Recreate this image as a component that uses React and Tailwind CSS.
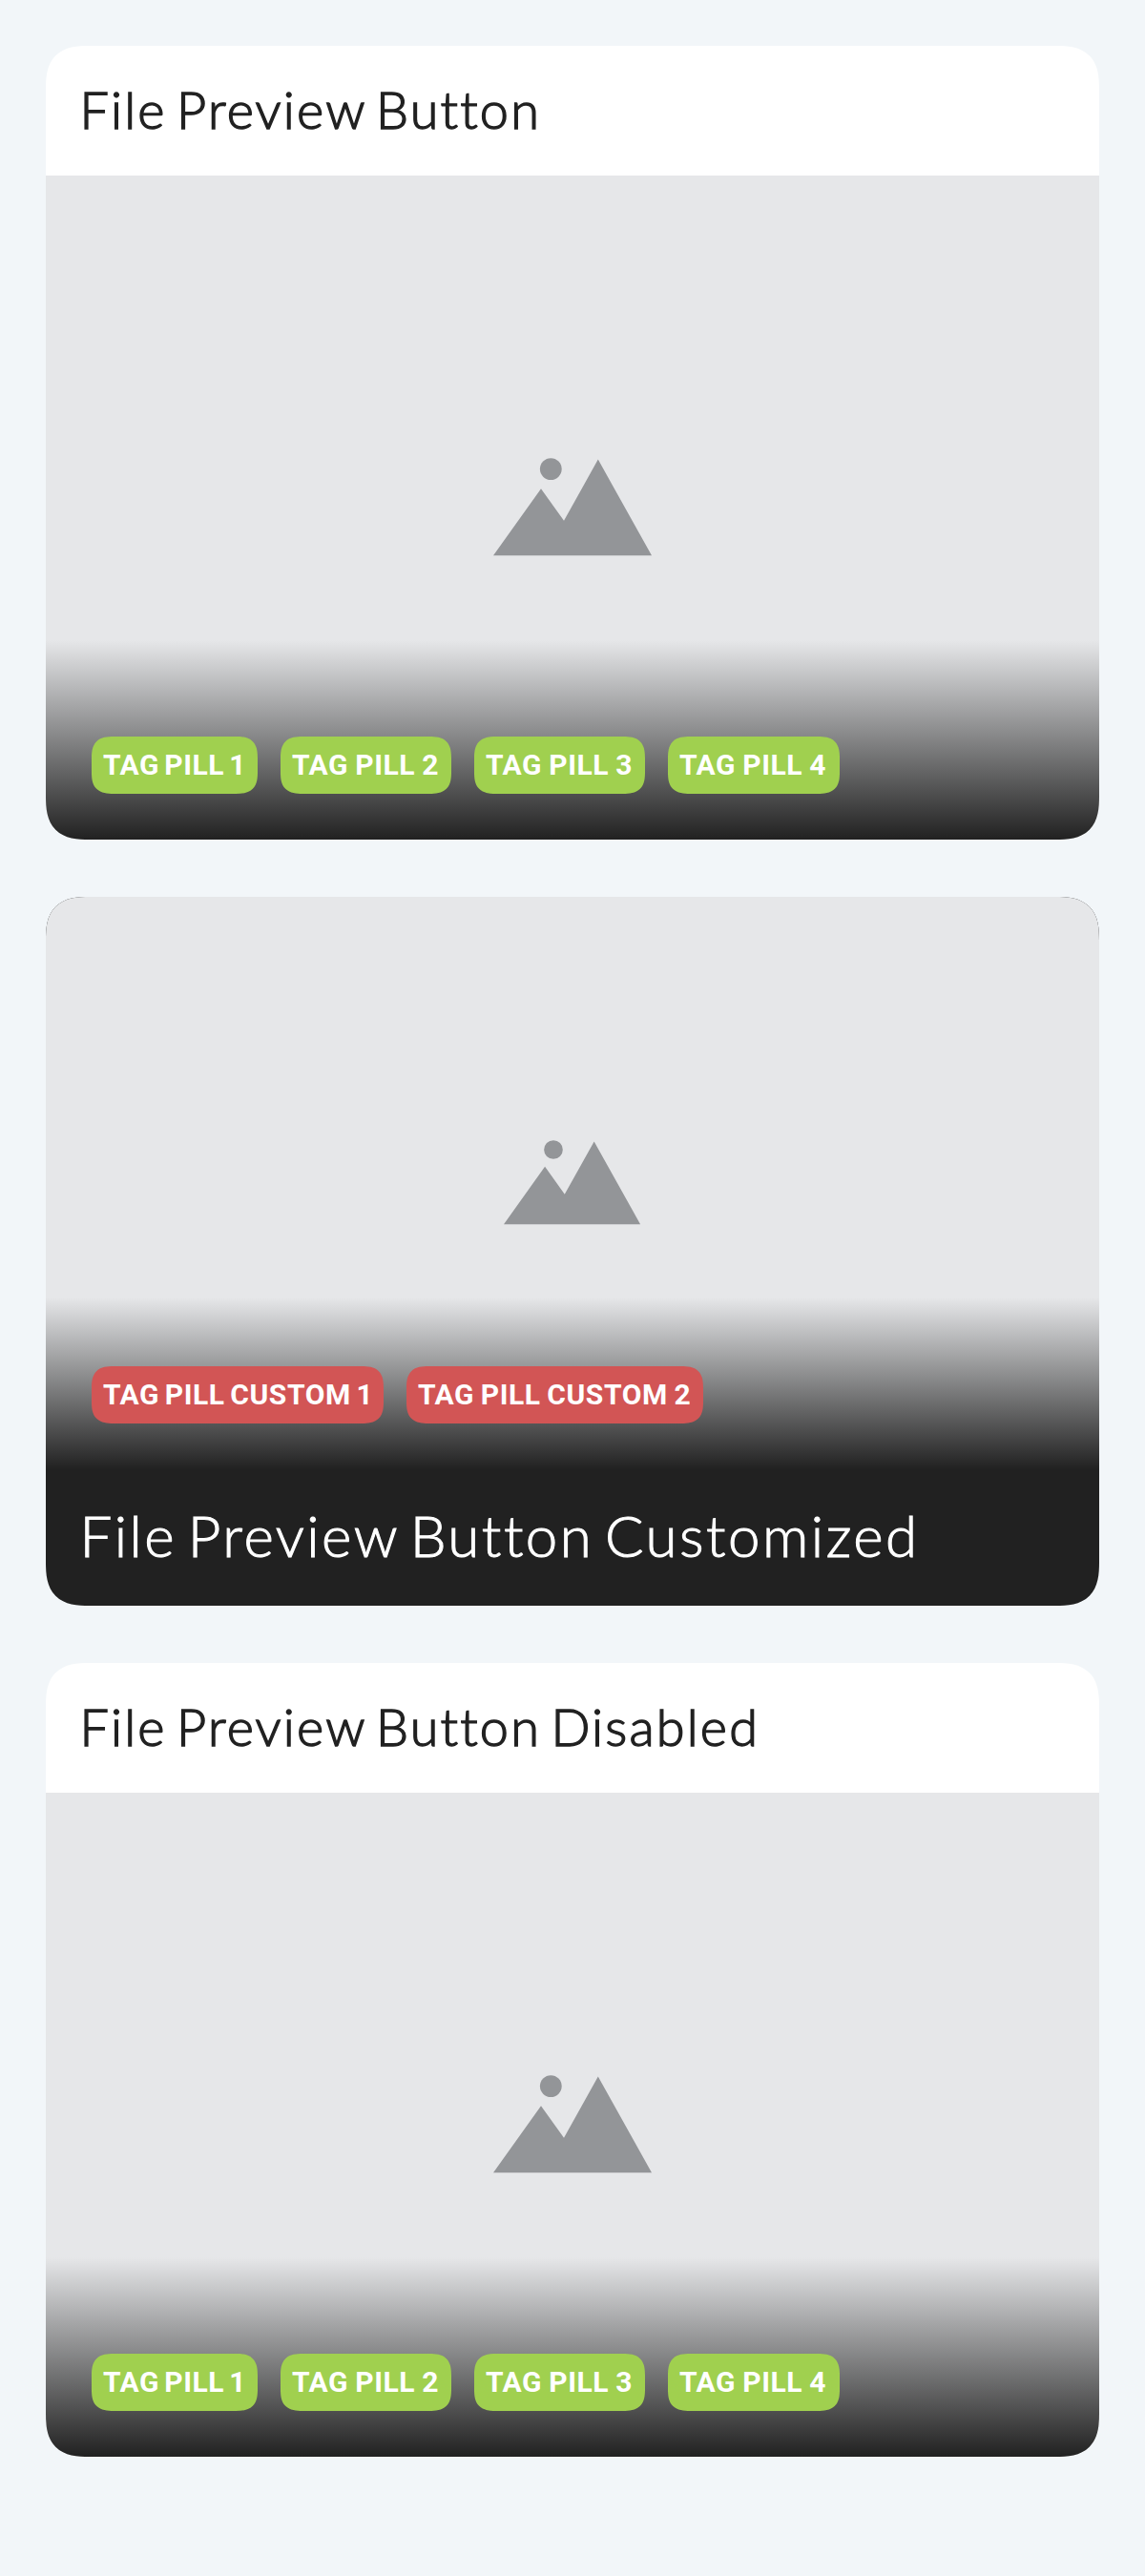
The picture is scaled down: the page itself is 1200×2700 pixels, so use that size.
function Placeholder({ className }) {
  return (
    <svg viewBox="0 0 166 104" className={className} fill="#939598" aria-hidden="true">
      <circle cx="60.3" cy="11.6" r="11.4" />
      <path d="M0 102.3 50 32.2 74 65.8 109.8 1.6 166 102.3Z" />
    </svg>
  );
}

function Pill({ label, className }) {
  return (
    <span
      className={`h-[60px] shrink-0 whitespace-nowrap rounded-[23px] pl-3 font-['Roboto',sans-serif] text-[30px] font-bold leading-[60px] text-white [corner-shape:superellipse(1.45)] ${className}`}
    >
      {label}
    </span>
  );
}

function Preview({ pills, pillColor, className, iconClassName }) {
  return (
    <div className={`relative flex items-center justify-center bg-[#e6e7e9] ${className}`}>
      <Placeholder className={iconClassName} />
      <div className="absolute inset-x-0 bottom-0 flex h-[30%] items-end gap-6 bg-linear-to-b from-[#212121]/0 to-[#212121] px-12 pb-12">
        {pills.map((p) => (
          <Pill key={p.label} label={p.label} className={`${pillColor} ${p.fit}`} />
        ))}
      </div>
    </div>
  );
}

const tagPills = [
  { label: "TAG PILL 1", fit: "w-[174px] tracking-[0.6px] [word-spacing:-3px]" },
  { label: "TAG PILL 2", fit: "w-[179px] tracking-[0.6px] [word-spacing:-1px]" },
  { label: "TAG PILL 3", fit: "w-[179px] tracking-[0.6px] [word-spacing:-1px]" },
  { label: "TAG PILL 4", fit: "w-[180px] tracking-[0.6px] [word-spacing:-1px]" },
];

const customPills = [
  { label: "TAG PILL CUSTOM 1", fit: "w-[306px] tracking-[0.6px] [word-spacing:-2.5px]" },
  { label: "TAG PILL CUSTOM 2", fit: "w-[311px] tracking-[0.6px] [word-spacing:-1.5px]" },
];

function FileCard({ title }) {
  return (
    <button
      type="button"
      className="flex w-full flex-col overflow-hidden rounded-[46px] bg-white text-left [corner-shape:superellipse(1.45)]"
    >
      <span className="block h-[136px] w-full whitespace-nowrap pl-[35.5px] font-['Lato',sans-serif] text-[54px] font-light leading-[133px] tracking-[2.2px] text-[#212121] [-webkit-text-stroke:1.4px_#212121] [word-spacing:-6.5px]">
        {title}
      </span>
      <Preview
        pills={tagPills}
        pillColor="bg-[#a0d04f]"
        className="h-[696px] w-full"
        iconClassName="h-[104px] w-[166px]"
      />
    </button>
  );
}

function CustomFileCard({ title }) {
  return (
    <button
      type="button"
      className="flex w-full flex-col rounded-[46px] bg-[#212121] text-left [corner-shape:superellipse(1.45)]"
    >
      <Preview
        pills={customPills}
        pillColor="bg-[#d25555]"
        className="h-[600px] w-full rounded-t-[46px] [corner-shape:superellipse(1.45)]"
        iconClassName="h-[89.7px] w-[143.1px]"
      />
      <span className="block h-[143px] w-full whitespace-nowrap pl-[35.5px] font-['Lato',sans-serif] text-[60px] font-light leading-[138px] tracking-[2.5px] text-white [-webkit-text-stroke:1px_white] [word-spacing:-7px]">
        {title}
      </span>
    </button>
  );
}

export default function App() {
  return (
    <main className="flex h-[2700px] w-full flex-col gap-[60px] bg-[#f2f6f9] p-12">
      <FileCard title="File Preview Button" />
      <CustomFileCard title="File Preview Button Customized" />
      <FileCard title="File Preview Button Disabled" />
    </main>
  );
}
